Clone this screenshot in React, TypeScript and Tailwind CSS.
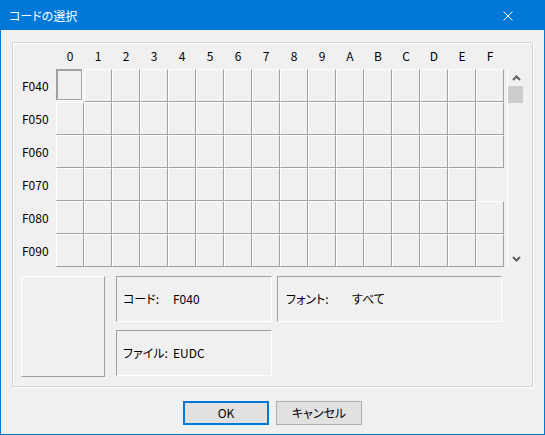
import React from "react";

const cols = ["0", "1", "2", "3", "4", "5", "6", "7", "8", "9", "A", "B", "C", "D", "E", "F"];
const rows = ["F040", "F050", "F060", "F070", "F080", "F090"];

// cells that have no glyph slot drawn (row, col)
const blank = new Set(["3-15"]);

function Cell({ row, col }: { row: number; col: number }) {
  if (blank.has(`${row}-${col}`)) {
    return <div className="w-[28px] h-[33px] shrink-0" />;
  }
  if (row === 0 && col === 0) {
    return (
      <div className="w-[28px] h-[33px] shrink-0">
        <div className="w-[26px] h-[31px] border-t-2 border-l-2 border-r border-b border-[#a0a0a0] shadow-[1px_1px_0_#ffffff]" />
      </div>
    );
  }
  return (
    <div className="w-[28px] h-[33px] shrink-0 border-t border-l border-t-white border-l-white border-b border-r border-b-[#a0a0a0] border-r-[#a0a0a0]" />
  );
}

function InfoBox({ label, value, width, labelWidth, pad }: { label: string; value: string; width: string; labelWidth: string; pad: string }) {
  return (
    <div className={`${width} h-[46px] flex items-center ${pad} border-t border-l border-t-[#a0a0a0] border-l-[#a0a0a0] border-b border-r border-b-white border-r-white`}>
      <span className={labelWidth}>{label}</span>
      <span>{value}</span>
    </div>
  );
}

export default function App() {
  return (
    <div
      className="w-[545px] h-[435px] border border-[#0078d7] bg-[#f0f0f0] flex flex-col text-[12px] text-black [font-feature-settings:'palt'] leading-none"
      style={{ fontFamily: '"Noto Sans CJK JP", "Noto Sans", sans-serif' }}
    >
      {/* title bar */}
      <div className="h-[29px] bg-[#0078d7] flex items-center justify-between pl-[8px] shrink-0">
        <span className="text-white text-[12px]">コードの選択</span>
        <svg width="10" height="10" viewBox="0 0 10 10" className="mr-[31px]">
          <path d="M0.5 0.5 L9.5 9.5 M9.5 0.5 L0.5 9.5" stroke="#ffffff" strokeWidth="1" fill="none" />
        </svg>
      </div>

      {/* group frame */}
      <div className="ml-[11px] mt-[12px] w-[521px] h-[345px] border border-[#d5d5d5] shadow-[inset_1px_1px_0_#ffffff,1px_1px_0_#ffffff] flex flex-col">
        <div className="h-[26px] flex items-center shrink-0">
          <div className="w-[43px] shrink-0" />
          {cols.map((c) => (
            <div key={c} className="w-[28px] shrink-0 text-center">
              {c}
            </div>
          ))}
        </div>

        <div className="flex">
          <div className="flex flex-col">
            {rows.map((r, ri) => (
              <div key={r} className="flex h-[33px]">
                <div className="w-[43px] shrink-0 pl-[9px] flex items-center">{r}</div>
                {cols.map((c, ci) => (
                  <Cell key={c} row={ri} col={ci} />
                ))}
              </div>
            ))}
          </div>

          {/* scrollbar */}
          <div className="ml-[3px] w-[17px] h-[198px] border-l border-white flex flex-col">
            <div className="h-[17px] flex items-center justify-center">
              <svg width="9" height="6" viewBox="0 0 9 6">
                <path d="M1 5 L4.5 1.5 L8 5" stroke="#606060" strokeWidth="2" fill="none" />
              </svg>
            </div>
            <div className="h-[17px] w-[15px] bg-[#cdcdcd]" />
            <div className="flex-1" />
            <div className="h-[17px] flex items-center justify-center">
              <svg width="9" height="6" viewBox="0 0 9 6">
                <path d="M1 1 L4.5 4.5 L8 1" stroke="#606060" strokeWidth="2" fill="none" />
              </svg>
            </div>
          </div>
        </div>

        {/* info area */}
        <div className="mt-[9px] pl-[8px] flex">
          <div className="w-[84px] h-[101px] border-t border-l border-t-white border-l-white border-b border-r border-b-[#a0a0a0] border-r-[#a0a0a0]" />
          <div className="ml-[11px] flex flex-col gap-[8px]">
            <InfoBox label="コード:" value="F040" width="w-[156px]" labelWidth="w-[50px]" pad="pl-[6px]" />
            <InfoBox label="ファイル:" value="EUDC" width="w-[156px]" labelWidth="w-[50px]" pad="pl-[6px]" />
          </div>
          <div className="ml-[5px]">
            <InfoBox label="フォント:" value="すべて" width="w-[225px]" labelWidth="w-[66px]" pad="pl-[8px]" />
          </div>
        </div>
      </div>

      {/* buttons */}
      <div className="mt-[14px] flex justify-center gap-[7px]">
        <button className="w-[86px] h-[24px] border-2 border-[#0078d7] bg-[#e1e1e1] flex items-center justify-center">
          OK
        </button>
        <button className="w-[86px] h-[24px] border border-[#adadad] bg-[#e1e1e1] flex items-center justify-center">
          キャンセル
        </button>
      </div>
    </div>
  );
}
